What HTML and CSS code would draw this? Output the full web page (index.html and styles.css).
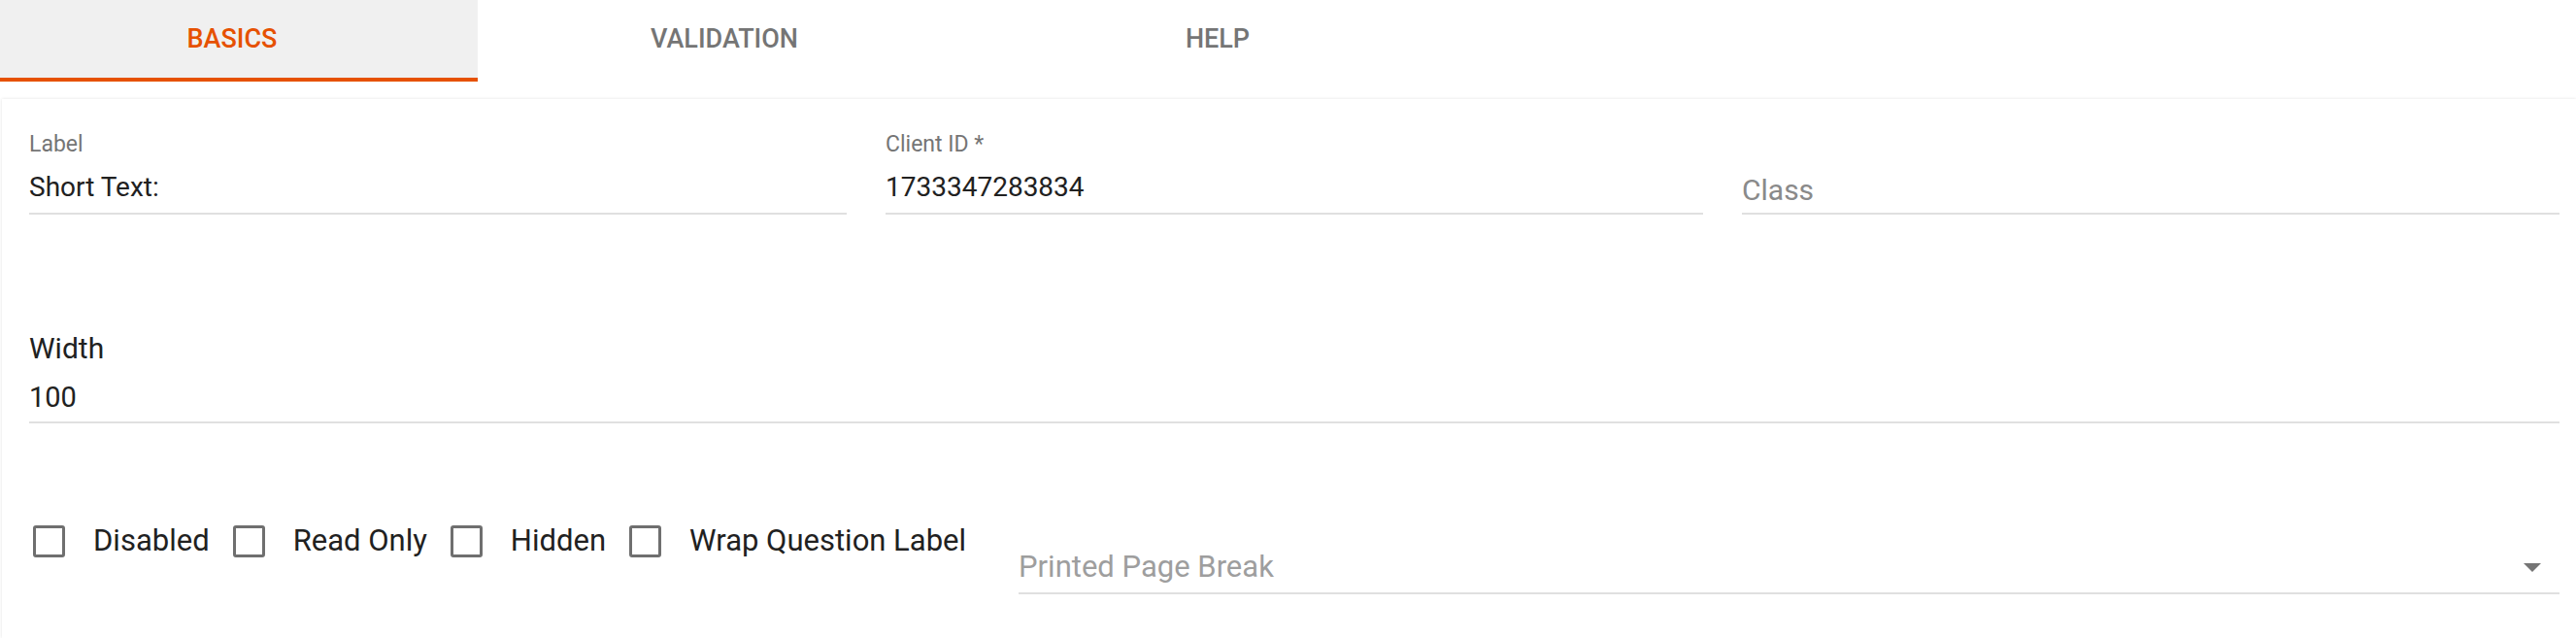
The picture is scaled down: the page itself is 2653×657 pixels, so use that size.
FILE: index.html
```html
<!DOCTYPE html>
<html lang="en">
<head>
    <meta charset="UTF-8">
    <title>Short Text</title>
    <link rel="stylesheet" href="styles.css">
</head>
<body>

<!--tabs-->
<div class="tabs">
    <div class="tab tab_first tab_active">Basics</div>
    <div class="tab">Validation</div>
    <div class="tab">Help</div>
</div>

<div class="panel">
    <!--first row: label / client id / class-->
    <div class="row_three">
        <div class="field">
            <label class="field_label">Label</label>
            <div class="field_input">Short Text:</div>
        </div>
        <div class="field">
            <label class="field_label">Client ID *</label>
            <div class="field_input">1733347283834</div>
        </div>
        <div class="field field_empty">
            <div class="field_input placeholder">Class</div>
        </div>
    </div>

    <!--width-->
    <div class="field field_width">
        <label class="width_label">Width</label>
        <div class="field_input width_input">100</div>
    </div>

    <!--checkboxes + select-->
    <div class="row_options">
        <div class="checks">
            <label class="check"><span class="box"></span>Disabled</label>
            <label class="check"><span class="box"></span>Read Only</label>
            <label class="check"><span class="box"></span>Hidden</label>
            <label class="check"><span class="box"></span>Wrap Question Label</label>
        </div>
        <div class="select">
            <span class="select_text">Printed Page Break</span>
            <svg class="arrow" width="18" height="9" viewBox="0 0 18 9"><path d="M0 0 L18 0 L9 9 Z" fill="#757575"/></svg>
        </div>
    </div>
</div>

</body>
</html>
```

FILE: styles.css
```css
*{
    margin: 0px;
    padding: 0px;
    box-sizing: border-box;
}
body{
    font-family: Roboto, "Liberation Sans", sans-serif;
    background-color: white;
    color: #212121;
}

/*tabs*/
.tabs{
    display: flex;
    height: 84px;
}
.tab{
    width: 508px;
    height: 84px;
    padding-bottom: 4px;
    display: flex;
    align-items: center;
    justify-content: center;
    font-size: 27px;
    font-weight: 500;
    text-transform: uppercase;
    color: #757575;
}
.tab_first{
    width: 492px;
    padding-right: 14px;
}
.tab_active{
    background-color: #F0F0F0;
    color: #E65100;
    border-bottom: 4px solid #E65100;
    padding-bottom: 0px;
}

.panel{
    margin: 18px 0 0 2px;
    height: 555px;
    padding: 35px 17px 0 28px;
    box-shadow: 0 0 3px rgba(0,0,0,0.12);
}

.row_three{
    display: grid;
    grid-template-columns: 1fr 1fr 1fr;
    column-gap: 40px;
}
.field{
    display: flex;
    flex-direction: column;
}
.field_empty{
    justify-content: flex-end;
}
.field_label{
    font-size: 23px;
    line-height: 24px;
    color: #757575;
}
.field_input{
    margin-top: 12px;
    font-size: 28px;
    line-height: 40px;
    padding-bottom: 6px;
    border-bottom: 2px solid #E0E0E0;
}
.placeholder{
    font-size: 30px;
    color: #8A8A8A;
    padding-top: 3px;
    padding-bottom: 3px;
}

.field_width{
    margin-top: 118px;
}
.width_label{
    font-size: 30px;
    line-height: 40px;
    color: #212121;
}
.width_input{
    margin-top: 10px;
    padding-bottom: 5px;
    font-size: 29px;
}

.row_options{
    display: flex;
    align-items: flex-start;
    margin-top: 101px;
}
.checks{
    display: flex;
    margin-left: 4px;
}
.check{
    display: flex;
    align-items: center;
    font-size: 31px;
    line-height: 40px;
    margin-right: 24px;
    white-space: nowrap;
}
.check:last-child{
    margin-right: 0px;
}
.box{
    width: 33px;
    height: 33px;
    border: 3px solid #6F6F6F;
    border-radius: 3px;
    margin-right: 29px;
}

.select{
    flex: 1;
    display: flex;
    align-items: center;
    margin-left: 54px;
    margin-top: 27px;
    font-size: 31px;
    line-height: 40px;
    padding-bottom: 6px;
    border-bottom: 2px solid #E0E0E0;
}
.select_text{
    flex: 1;
    color: #9E9E9E;
}
.arrow{
    margin-right: 19px;
}
```
